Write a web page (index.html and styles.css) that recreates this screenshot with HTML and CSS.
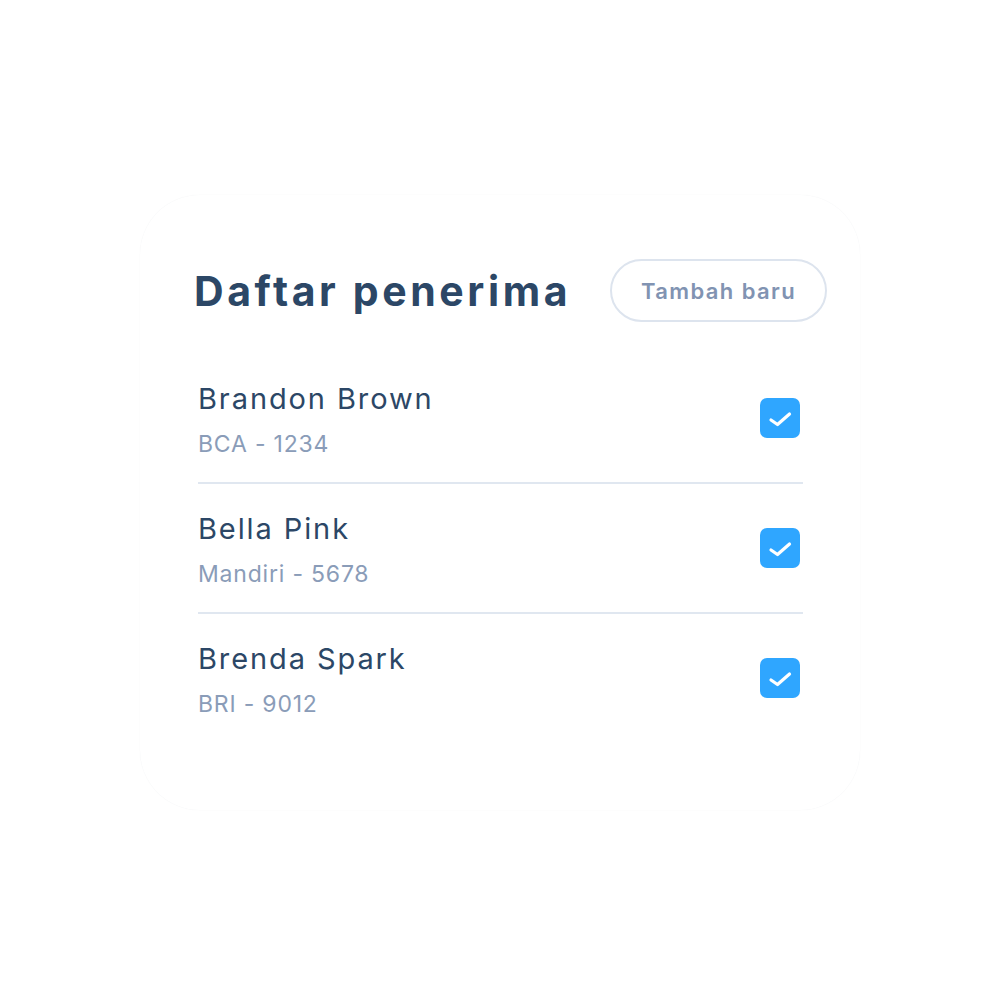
FILE: index.html
```html
<!DOCTYPE html>
<html lang="id">
<head>
<meta charset="utf-8">
<title>Daftar penerima</title>
<link rel="stylesheet" href="styles.css">
</head>
<body>
<div class="card">
  <div class="header">
    <h1 class="title">Daftar penerima</h1>
    <button class="add-btn">Tambah baru</button>
  </div>
  <ul class="list">
    <li class="row">
      <div class="info">
        <div class="name">Brandon Brown</div>
        <div class="account">BCA - 1234</div>
      </div>
      <span class="check"><svg viewBox="0 0 40 40" width="40" height="40"><path d="M11 22 L17.5 26.5 L29.5 16" fill="none" stroke="#fff" stroke-width="3.2" stroke-linecap="round" stroke-linejoin="round"/></svg></span>
    </li>
    <li class="row">
      <div class="info">
        <div class="name">Bella Pink</div>
        <div class="account">Mandiri - 5678</div>
      </div>
      <span class="check"><svg viewBox="0 0 40 40" width="40" height="40"><path d="M11 22 L17.5 26.5 L29.5 16" fill="none" stroke="#fff" stroke-width="3.2" stroke-linecap="round" stroke-linejoin="round"/></svg></span>
    </li>
    <li class="row last">
      <div class="info">
        <div class="name">Brenda Spark</div>
        <div class="account">BRI - 9012</div>
      </div>
      <span class="check"><svg viewBox="0 0 40 40" width="40" height="40"><path d="M11 22 L17.5 26.5 L29.5 16" fill="none" stroke="#fff" stroke-width="3.2" stroke-linecap="round" stroke-linejoin="round"/></svg></span>
    </li>
  </ul>
</div>
</body>
</html>
```

FILE: styles.css
```css
html, body {
  margin: 0;
  padding: 0;
  background: #ffffff;
}
body {
  width: 1001px;
  height: 1001px;
  font-family: Inter, "Open Sans", sans-serif;
  padding-top: 195px;
  box-sizing: border-box;
}
.card {
  margin-left: 140px;
  width: 720px;
  height: 615px;
  border-radius: 60px;
  background: #ffffff;
  box-shadow: 0 0 1px rgba(40, 60, 90, 0.08);
  padding-top: 64px;
  box-sizing: border-box;
}
.header {
  margin-left: 54px;
  width: 633px;
  display: flex;
  align-items: center;
  justify-content: space-between;
}
.title {
  margin: 0;
  font-size: 41px;
  font-weight: 700;
  letter-spacing: 3.6px;
  color: #2c4766;
  line-height: 48px;
}
.add-btn {
  width: 217px;
  height: 63px;
  border-radius: 32px;
  border: 2px solid #dde4ee;
  background: #ffffff;
  font-family: inherit;
  font-size: 22px;
  font-weight: 600;
  letter-spacing: 1.4px;
  color: #8193b2;
  padding: 0;
}
.list {
  list-style: none;
  margin: 32px 0 0 58px;
  padding: 0;
  width: 605px;
}
.row {
  display: flex;
  align-items: center;
  justify-content: space-between;
  padding: 27px 0 23px;
  border-bottom: 2px solid #e0e7f0;
}
.row.last {
  border-bottom: none;
}
.info {
  display: flex;
  flex-direction: column;
  gap: 12px;
}
.name {
  font-size: 29px;
  line-height: 36px;
  letter-spacing: 1.9px;
  color: #2c4766;
}
.account {
  font-size: 23px;
  line-height: 30px;
  letter-spacing: 0.8px;
  color: #8a9cb8;
}
.check {
  width: 40px;
  height: 40px;
  border-radius: 7px;
  background: #2fa6ff;
  margin-right: 3px;
  margin-bottom: 4px;
  display: block;
}
.check svg {
  display: block;
}
```
